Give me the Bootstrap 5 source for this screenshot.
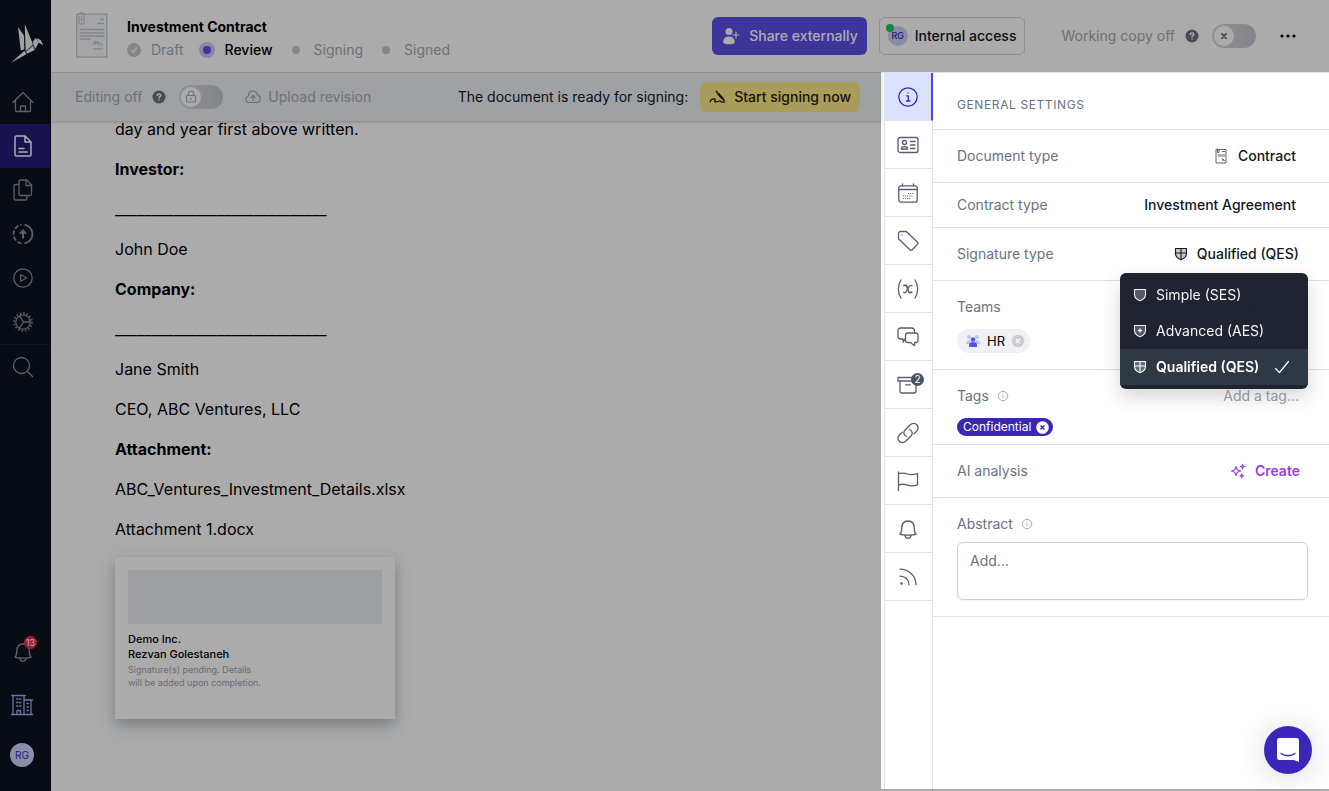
<!DOCTYPE html>
<html lang="en">
<head>
<meta charset="utf-8">
<meta name="viewport" content="width=device-width, initial-scale=1">
<title>Investment Contract</title>
<link href="https://cdn.jsdelivr.net/npm/bootstrap@5.3.0/dist/css/bootstrap.min.css" rel="stylesheet">
<style>
:root{--ink:#111827;--muted:#6b7280;--faint:#a3a9b5;--line:#e0e1e7;--brand:#3a27ba;--accent:#5b50e6}
body{font-family:Inter,"Liberation Sans",sans-serif;font-size:14px;line-height:20px;color:var(--ink);background:#fff}
svg{display:block;flex:none;fill:none;stroke:currentColor;stroke-width:1.3;stroke-linecap:round;stroke-linejoin:round}
button{font-family:inherit}
.plain{background:none;border:0;padding:0;color:inherit}
.fw-mid{font-weight:500}
.muted{color:var(--muted)}
.faint{color:var(--faint)}

.side-nav{width:51px;background:#0b1320;color:#8b8f96;border-right:1px solid #070b1c}
.side-nav a{color:inherit;height:44px;padding-right:4px}
.side-nav a.current{background:#281b78;color:#fff}
.side-nav .logo{height:80px;color:#f0f0f0;padding:6px 0 0 4px}
.side-nav .rule{border-top:1px solid #1b2333}
.side-nav .alerts{height:62px}
.side-nav .firm{height:44px;color:#9fb0f0;padding-right:6px}
.side-nav .me{height:56px;padding-right:6px}
.count{font-size:9px;line-height:13px;min-width:13px;height:13px;border-radius:7px;text-align:center;color:#fff}
.count-red{background:#fb2846;left:24px;top:15px}
.count-gray{background:#4b5563;left:26px;top:12px;font-size:10px}
.avatar{width:24px;height:24px;border-radius:50%;background:#cdd2fd;color:var(--brand);font-size:10px}
.avatar-sm{width:20px;height:20px;font-size:9px}
.online{width:8px;height:8px;border-radius:50%;background:#22c55e;left:-2px;top:-2px}

.top-bar{min-height:73px;border-bottom:1px solid #e0e1e7;padding:0 32px 0 24px}
.doc-head{margin-left:18px}
.doc-name{font-size:14px;line-height:20px}
.step-mark{width:16px;height:16px;border-radius:50%}
.step-mark i{width:8px;height:8px;border-radius:50%;background:#c4c8cf}
.step-mark.on{background:#cdc9fb}
.step-mark.on i{background:var(--accent)}
.step-mark.done{width:14px;height:14px;background:#c4c8cf;color:#fff}
.steps{gap:15px;padding-top:3px}
.step{gap:10px}
.btn-bar{height:38px;border-radius:6px;font-size:14px;font-weight:500;line-height:20px;padding:0 8px}
.btn-share{background:var(--accent);color:#fff}
.btn-inside{border:1px solid #d1d5db;background:#fff;color:var(--ink);margin-left:12px;gap:7px}
.copy-group{margin-left:36px}
.switch-text{margin-right:10px}
.help-mark{margin-right:13px}
.more{margin-left:23px}
.btn-sign{height:30px;border-radius:6px;background:#fee986;color:#2e1a06;font-size:14px;font-weight:500;line-height:20px;padding:0 8px}
.switch{width:44px;height:24px}
.switch input{appearance:none;width:44px;height:24px;margin:0;border-radius:12px;background:linear-gradient(90deg,#d6d9df,#c2c6cd);cursor:pointer}
.switch .knob{left:2px;top:2px;width:20px;height:20px;border-radius:50%;background:#fff;color:#a9adb6;pointer-events:none}
.tool-bar{height:48px;background:#eef0f4;padding:0 21px 0 24px;box-shadow:0 1px 3px rgba(0,0,0,.22)}
.upload{margin-left:22px;gap:7px}
.ready{margin-right:12px}

.doc-body{padding:0 64px;color:#000}
.doc-text{font-size:16px;line-height:16px;gap:24px}
.doc-text p{margin:0}
.doc-text strong{font-weight:700}
.sign-card{width:280px;min-height:162px;margin-top:20px;padding:13px;background:#fff;box-shadow:0 6px 14px rgba(30,41,69,.34)}
.sign-slot{height:54px;background:#ebedf0;margin-bottom:8px}
.sign-card .who{font-size:11px;line-height:15px;font-weight:500}
.sign-card .note{font-size:9px;line-height:13px;color:#9ca3af;margin-top:1px}

.info-panel{width:448px;background:#fff}
.grip{width:3px;background:#fbfbfd}
.rail{width:49px;border-left:1px solid var(--line);border-right:1px solid var(--line);color:#566070}
.rail button{height:48px;border-bottom:1px solid var(--line);padding-right:2px}
.rail button.current{background:#dbe2fe;color:var(--brand);border-right:2px solid #5046e5;margin-right:-1px;padding:0}
.set-row{border-bottom:1px solid var(--line);padding:0 21px 0 24px}
.h-row{height:53px}
.h-row-s{height:45px}
.panel-title{height:57px;padding-top:8px;font-size:12px;letter-spacing:.05em;font-weight:400;color:var(--muted);margin:0}
.stack-row{padding-top:16px;padding-bottom:16px}
.tight{padding-bottom:8px}
.value{padding-right:12px;gap:9px}
.value-s{padding-right:8px;gap:9px}
.pick{height:38px;padding-right:9px}
.ghost{border:0;background:none;outline:0;padding:0 9px 0 0;height:20px;text-align:right;width:160px;color:var(--ink)}
.ghost::placeholder{color:#9ca3af;opacity:1}
.chip{height:24px;border-radius:12px;background:#f0f1f4;font-size:13px;padding:0 5px 0 8px;gap:6px;color:#000}
.chip-tag{height:18px;background:var(--brand);color:#fff;font-size:12px;padding:0 4px 0 6px;gap:5px}
.type-menu{right:0;left:auto;top:38px;width:188px;background:rgba(27,31,43,.975);border:0;border-radius:6px;padding:4px 0;color:#f3f4f6;box-shadow:0 8px 20px rgba(0,0,0,.16);font-size:14px}
.type-menu button{height:36px;padding:0 18px 0 12px;color:#f3f4f6;gap:8px;line-height:20px}
.type-menu button:hover,.type-menu button.on{background:#2f3945;color:#fff}
.create{color:#9f3bea}
.abstract{height:58px;border:1px solid #cfd0d8;border-radius:6px;padding:8px 12px;font-size:14px;resize:none;display:block;box-shadow:0 1px 2px rgba(0,0,0,.05)}
.abstract::placeholder{color:var(--muted);opacity:1}
.chat{right:17px;bottom:17px;width:48px;height:48px;border-radius:50%;background:var(--brand);color:#fff;box-shadow:0 2px 28px rgba(0,0,0,.16);z-index:20}
.spotlight{top:72px;right:0;bottom:2px;width:448px;box-shadow:0 0 0 9999px rgba(0,0,0,.33);pointer-events:none;z-index:30}
.shrinkable{min-width:0;min-height:0}
</style>
</head>
<body class="vh-100 overflow-hidden">
<svg width="0" height="0" class="position-absolute" aria-hidden="true">
  <symbol id="help" viewBox="0 0 14 14"><circle cx="7" cy="7" r="6.500" fill="currentColor" stroke="none"/><path d="M5.300 5.500c0-2.200 3.400-2.100 3.400-.1 0 1.300-1.700 1.300-1.700 2.500M7 10v.1" stroke="#fff" stroke-width="1.500"/></symbol>
  <symbol id="info" viewBox="0 0 12 12"><circle cx="6" cy="6" r="4.700" stroke-width="1"/><path d="M6 5.700v2.300M6 3.900v.1" stroke-width="1"/></symbol>
  <symbol id="shield" viewBox="0 0 14 14"><path d="M1.500 1.500h11v5c0 3-2.300 5-5.500 6.300C3.800 11.500 1.500 9.500 1.500 6.500z" fill="currentColor" fill-opacity=".25" stroke-width="1.100"/></symbol>
  <symbol id="bell" viewBox="0 0 20 20"><path d="M1.800 15.200c1.700-1.300 1.900-3 1.900-5.700 0-5 2.600-7.500 6.300-7.500s6.300 2.500 6.300 7.500c0 2.700.2 4.400 1.900 5.700-3 1.200-13.400 1.200-16.400 0zM7 16.200c.2 4 5.800 4 6 0"/></symbol>
</svg>

<div class="d-flex h-100">
  <nav class="side-nav d-flex flex-column flex-shrink-0" aria-label="Main">
    <a class="logo d-flex align-items-center justify-content-center" href="#" aria-label="Home page">
      <svg width="33" height="39" viewBox="0 0 33 39" style="stroke:none;fill:currentColor"><path d="M7 3l6 8.500.3 13.800-3.500 1.200z"/><path d="M13.700 0l7.800 19 .2 2-7 6.200z"/><path d="M0 38.700l13.500-12 1.800 3.500z"/><path d="M15 27.800l6.900-6 1.900 4.200-8 3.800z"/><path d="M21.800 17.500l3-3.500 3 4.500-3.600 6.500-1.800-4z"/><path d="M25.700 14l4 2 2.500 5.300-4.500-2.600z"/></svg>
    </a>
    <a class="d-flex align-items-center justify-content-center" href="#" aria-label="Dashboard"><svg width="22" height="22" viewBox="0 0 22 22"><path d="M1 11.500L11 1.500l10 10M3.500 9.500V19.500a1 1 0 001 1h13a1 1 0 001-1V9.500M8.500 20.500v-5.500h5v5.500"/></svg></a>
    <a class="current d-flex align-items-center justify-content-center" href="#" aria-label="Documents"><svg width="20" height="22" viewBox="0 0 20 22" style="stroke-width:1.500"><path d="M3.500 1H12l6 6v12.500a1.500 1.500 0 01-1.500 1.500h-13A1.500 1.500 0 012 19.500v-17A1.500 1.500 0 013.500 1zM12 1v6h6M6 13.500h5M6 17h8"/></svg></a>
    <a class="d-flex align-items-center justify-content-center" href="#" aria-label="Templates"><svg width="20" height="22" viewBox="0 0 20 22"><path d="M7.500 1H14l4.500 5v9a1.500 1.500 0 01-1.500 1.500H7.500A1.500 1.500 0 016 15V2.500A1.500 1.500 0 017.500 1zM13 1v5.500h5.500M6 5.500H2.500A1.500 1.500 0 001 7v12.500A1.500 1.500 0 002.500 21h10a1.500 1.500 0 001.500-1.500v-3"/></svg></a>
    <a class="d-flex align-items-center justify-content-center" href="#" aria-label="Imports"><svg width="22" height="22" viewBox="0 0 22 22" style="stroke-linecap:butt"><path d="M12.500 1.700a9.400 9.400 0 010 18.600" stroke-width="1.800"/><path d="M9.500 20.300a9.400 9.400 0 010-18.600" stroke-width="1.800" stroke-dasharray="4.500 1.800"/><path d="M11 15.500V9" stroke-width="2"/><path d="M11 6l4.200 4.700H6.800z" fill="currentColor" stroke="none"/></svg></a>
    <a class="d-flex align-items-center justify-content-center" href="#" aria-label="Tutorials"><svg width="20" height="20" viewBox="0 0 20 20"><circle cx="10" cy="10" r="9.200"/><path d="M7.700 6.700v6.600l6-3.300z"/></svg></a>
    <a class="d-flex align-items-center justify-content-center" href="#" aria-label="Settings"><svg width="20" height="20" viewBox="0 0 20 20"><circle cx="10" cy="10" r="7.200"/><circle cx="10" cy="10" r="8.900" stroke-width="1.800" stroke-dasharray="1.500 1.990" stroke-linecap="butt"/><path d="M10.500 10H17M10.500 10L6.500 3.800M10.500 10l-4 6.200"/></svg></a>
    <a class="rule d-flex align-items-center justify-content-center" href="#" aria-label="Search"><svg width="22" height="22" viewBox="0 0 22 22"><circle cx="9.500" cy="9.500" r="8"/><path d="M15.500 15.500l5 5"/></svg></a>
    <a class="alerts mt-auto position-relative d-flex align-items-center justify-content-center text-decoration-none" href="#" aria-label="Notifications"><svg width="20" height="20"><use href="#bell"/></svg><span class="count count-red position-absolute">13</span></a>
    <a class="firm d-flex align-items-center justify-content-center" href="#" aria-label="Company"><svg width="22" height="22" viewBox="0 0 22 22" stroke-linecap="butt"><path d="M2 20.500V1.500h11v19M13 6h7v14.500M.5 20.500h21M.7 1.500h13.800M13 6h8.500M6 20v-3.500h3.500V20"/><path d="M5.500 5h1.300M8.500 5h1.300M5.500 8.500h1.300M8.500 8.500h1.300M5.500 12h1.300M8.500 12h1.300M16 9.500h1.300M16 13h1.300M16 16.500h1.300"/></svg></a>
    <a class="me d-flex align-items-center justify-content-center text-decoration-none mb-2" href="#" aria-label="Account"><span class="avatar d-flex align-items-center justify-content-center">RG</span></a>
  </nav>

  <div class="shrinkable flex-grow-1 d-flex flex-column">
    <header class="top-bar d-flex align-items-center">
      <svg width="34" height="50" viewBox="0 0 34 50" style="stroke:#c3c7ce;stroke-linecap:butt"><path d="M1.700 3.200h30.100v43H1.700z" fill="#f6f7f9"/><path d="M22 12.500h7M25 8.500h4" stroke-width="1.300"/><path d="M4.500 18.500h25M4.500 22h25M4.500 25h25M4.500 28h11M18 37.800h10" stroke-width="1.300"/><path d="M18 34c2-5 3-4 2.500-1 2-4 3-2 2.500 1 2-3 2-3 3 0l2-.5" stroke-width="1.300"/><path d="M4 5v5.500c0 3.500 5 3.500 5 0V4c0-3.500-4.500-3-4.500 0M6.500 5.500v5" stroke-width="1.200"/></svg>
      <div class="doc-head pt-1 me-auto">
        <h1 class="doc-name fw-bold m-0 text-black">Investment Contract</h1>
        <div class="steps d-flex faint">
          <div class="step d-flex align-items-center"><span class="step-mark done d-flex align-items-center justify-content-center"><svg width="8" height="8" viewBox="0 0 8 8"><path d="M1.500 4.500L3.300 6.200 6.500 2"/></svg></span><span>Draft</span></div>
          <div class="step d-flex align-items-center"><span class="step-mark on d-flex align-items-center justify-content-center"><i></i></span><span class="fw-mid text-black">Review</span></div>
          <div class="step d-flex align-items-center"><span class="step-mark d-flex align-items-center justify-content-center"><i></i></span><span>Signing</span></div>
          <div class="step d-flex align-items-center"><span class="step-mark d-flex align-items-center justify-content-center"><i></i></span><span>Signed</span></div>
        </div>
      </div>
      <button type="button" class="btn btn-bar btn-share d-flex align-items-center gap-2 ms-3"><svg width="20" height="20" viewBox="0 0 20 20" style="stroke:none;fill:currentColor"><circle cx="8" cy="5.500" r="3.500"/><path d="M2.200 17c0-4.500 2-6.500 5.800-6.500s5.800 2 5.800 6.500c-2 1.800-9.600 1.800-11.600 0z"/><path d="M15 6v6M12 9h6" style="stroke:currentColor;stroke-width:1.200"/></svg>Share externally</button>
      <button type="button" class="btn btn-bar btn-inside d-flex align-items-center"><span class="avatar avatar-sm position-relative d-flex align-items-center justify-content-center">RG<span class="online position-absolute"></span></span>Internal access</button>
      <div class="copy-group d-flex align-items-center">
        <label for="copy" class="switch-text faint">Working copy off</label>
        <svg width="14" height="14" class="help-mark muted"><use href="#help"/></svg>
        <span class="switch position-relative flex-shrink-0"><input type="checkbox" id="copy"><span class="knob position-absolute d-flex align-items-center justify-content-center"><svg width="8" height="8" viewBox="0 0 8 8" class="muted"><path d="M2 2l4 4M6 2L2 6" stroke-width="1.900"/></svg></span></span>
      </div>
      <button type="button" class="more plain text-black" aria-label="More"><svg width="18" height="6" viewBox="0 0 18 6" style="fill:currentColor;stroke:none"><circle cx="3" cy="3" r="1.600"/><circle cx="9" cy="3" r="1.600"/><circle cx="15" cy="3" r="1.600"/></svg></button>
    </header>

    <div class="shrinkable d-flex flex-grow-1">
      <main class="shrinkable flex-grow-1">
        <div class="tool-bar d-flex align-items-center position-relative">
          <label for="edit" class="switch-text faint">Editing off</label>
          <svg width="14" height="14" class="help-mark muted"><use href="#help"/></svg>
          <span class="switch position-relative"><input type="checkbox" id="edit"><span class="knob position-absolute d-flex align-items-center justify-content-center"><svg width="12" height="14" viewBox="0 0 12 14"><rect x="1.500" y="5.500" width="9" height="6.500" rx="1" stroke-width="1.200"/><path d="M3.500 5.500v-2c0-3 5-3 5 0v2M6 8v1.500" stroke-width="1.200"/></svg></span></span>
          <button type="button" class="upload plain faint d-flex align-items-center"><svg width="16" height="14" viewBox="0 0 16 14"><path d="M4.500 12.500C2.300 12.500 1 11 1 9.200 1 7.500 2 6.300 3.500 6 3.500 3 5.500 1.200 8 1.200c2.300 0 4 1.400 4.300 3.600C14 5 15.200 6.500 15.200 8.500c0 2.400-1.500 4-3.700 4zM8 10.500V6M5.800 7.700L8 5.500l2.200 2.200" stroke-width="1.200"/></svg>Upload revision</button>
          <span class="ready ms-auto">The document is ready for signing:</span>
          <button type="button" class="btn btn-sign d-flex align-items-center gap-2"><svg width="17" height="14" viewBox="0 0 17 14"><path d="M9 3.500l4.500 5" stroke-width="2.600" stroke-linecap="butt"/><path d="M7.300 1.200L8.500 3M13.800 8.500l1.200 2" stroke-width="1.500"/><path d="M1.200 11.800C1 9.500 4.500 8.500 6 9s-2 3 .5 3 3.500-1.500 4.500-1 1 1.500 4.800.9" stroke-width="1.300"/></svg>Start signing now</button>
        </div>
        <article class="doc-body">
          <div class="doc-text d-flex flex-column">
            <p>day and year first above written.</p>
            <p><strong>Investor:</strong></p>
            <p>_____________________________</p>
            <p>John Doe</p>
            <p><strong>Company:</strong></p>
            <p>_____________________________</p>
            <p>Jane Smith</p>
            <p>CEO, ABC Ventures, LLC</p>
            <p><strong>Attachment:</strong></p>
            <p>ABC_Ventures_Investment_Details.xlsx</p>
            <p>Attachment 1.docx</p>
          </div>
          <section class="sign-card">
            <div class="sign-slot"></div>
            <div class="who">Demo Inc.<br>Rezvan Golestaneh</div>
            <div class="note">Signature(s) pending. Details<br>will be added upon completion.</div>
          </section>
        </article>
      </main>

      <aside class="info-panel d-flex flex-shrink-0">
        <div class="grip"></div>
        <div class="rail d-flex flex-column">
          <button type="button" class="plain current d-flex align-items-center justify-content-center" aria-label="General"><svg width="20" height="20" viewBox="0 0 20 20"><circle cx="10" cy="10" r="9.200"/><path d="M8.700 8.800h1.600v5M8.500 14h3.400M10 5.900v.2"/></svg></button>
          <button type="button" class="plain d-flex align-items-center justify-content-center" aria-label="Parties"><svg width="22" height="18" viewBox="0 0 22 18"><rect x="1" y="1.500" width="20" height="15" rx="2"/><circle cx="7.500" cy="6.500" r="2"/><path d="M4.300 13c0-3.300 6.400-3.300 6.400 0zM13.500 5.500h4.500M13.500 9h4.500M13.500 12.500h4.500"/></svg></button>
          <button type="button" class="plain d-flex align-items-center justify-content-center" aria-label="Dates"><svg width="20" height="20" viewBox="0 0 20 20"><rect x=".8" y="2.800" width="18.400" height="16.400" rx="2"/><path d="M1 6.500h18M4.500.8v2M15.500.8v2"/><path d="M10.500 10.500h5M5.500 13h9M5.500 15.500h8" stroke-dasharray=".1 2" stroke-width="1.200"/></svg></button>
          <button type="button" class="plain d-flex align-items-center justify-content-center" aria-label="Tags"><svg width="22" height="22" viewBox="0 0 22 22"><path d="M1.500 3.500a2 2 0 012-2h5.800l11 10.500c1 1 .8 1.700.2 2.300l-5.300 5.500c-.8.800-1.600.7-2.300 0L1.500 8.800z"/><path d="M5 5v.1"/></svg></button>
          <button type="button" class="plain d-flex align-items-center justify-content-center" aria-label="Variables"><svg width="22" height="20" viewBox="0 0 22 20"><path d="M4 1C.5 6 .5 14 4 19M18 1c3.500 5 3.500 13 0 18M15 6.700c-1.300-1-2.800.3-4.300 3.300S8 14.500 6.800 13.300"/><path d="M7 6.700c2-1.700 3 .3 3.700 3.300s1.500 4.800 4 3" stroke-width="1.700"/></svg></button>
          <button type="button" class="plain d-flex align-items-center justify-content-center" aria-label="Comments"><svg width="22" height="20" viewBox="0 0 22 20"><path d="M8.500 11.500L6 15v-3H3.500C2 12 1 11 1 9.500v-6C1 2 2 1 3.500 1h11C16 1 17.500 2 17.500 4v2"/><path d="M11 6h7.500c1.500 0 2.500 1 2.500 2.500V13c0 1.500-1 2.500-2.500 2.500h-.7l-.3 3.200-4-3.200H11c-1.500 0-2.500-1-2.500-2.500V8.500C8.500 7 9.500 6 11 6z"/></svg></button>
          <button type="button" class="plain position-relative d-flex align-items-center justify-content-center" aria-label="Archive"><svg width="22" height="20" viewBox="0 0 22 20"><path d="M1 2.500h20V6H1zM3 6.500V16a2 2 0 002 2h12a2 2 0 002-2V6.500M8.500 9.800h5"/></svg><span class="count count-gray position-absolute">2</span></button>
          <button type="button" class="plain d-flex align-items-center justify-content-center" aria-label="Links"><svg width="22" height="22" viewBox="0 0 22 22"><path d="M9.500 14.500c-3-1.500-3.500-4-1.500-6.500l5-5c2.500-2.200 5.500-2 7 0s1.300 4.300-.5 6.300L17 11.800"/><path d="M12.500 7.500c3 1.500 3.500 4 1.500 6.500l-5 5c-2.500 2.200-5.500 2-7 0s-1.300-4.300.5-6.300L5 10.200"/></svg></button>
          <button type="button" class="plain d-flex align-items-center justify-content-center" aria-label="Milestones"><svg width="22" height="20" viewBox="0 0 22 20"><path d="M1.500.8v18.700M1.500 2.500c3.500-1 6-.5 9 .5s6 1 10-.5v11.300c-4 1.500-7 1.300-10 .3s-5.500-1.300-9-.3"/></svg></button>
          <button type="button" class="plain d-flex align-items-center justify-content-center" aria-label="Reminders"><svg width="20" height="20"><use href="#bell"/></svg></button>
          <button type="button" class="plain d-flex align-items-center justify-content-center" aria-label="Activity"><svg width="18" height="18" viewBox="0 0 18 18"><path d="M1 1.200c9 0 16 7 16 15.500M1 8.200c5 0 9 3.500 9 8.500"/><circle cx="2.500" cy="15.500" r="1.300" fill="currentColor" stroke="none"/></svg></button>
        </div>

        <div class="flex-grow-1">
          <h2 class="set-row panel-title d-flex align-items-center">GENERAL SETTINGS</h2>
          <div class="set-row h-row d-flex align-items-center justify-content-between">
            <span class="muted">Document type</span>
            <button type="button" class="plain value fw-mid d-flex align-items-center"><svg width="16" height="16" viewBox="0 0 16 16"><g stroke="#5f636b" stroke-width="1" stroke-linecap="butt" stroke-linejoin="miter"><path d="M3 1.500h10v13.500H3z"/><path d="M4.500 7.500h7.500" stroke-width="3" stroke="#b0b2b6"/><path d="M4.500.5v4h1.500v-3M9 3.500h3M8.500 10.500l3.500 2.500M9 12h2"/></g></svg>Contract</button>
          </div>
          <div class="set-row h-row-s d-flex align-items-center justify-content-between">
            <span class="muted">Contract type</span>
            <button type="button" class="plain value fw-mid">Investment Agreement</button>
          </div>
          <div class="set-row h-row d-flex align-items-center justify-content-between">
            <span class="muted">Signature type</span>
            <div class="position-relative">
              <button type="button" class="plain value-s pick fw-mid d-flex align-items-center" aria-expanded="true"><svg width="14" height="14" viewBox="0 0 14 14"><use href="#shield"/><path d="M7 2v10.500M2 6h10" stroke-width="1.100"/></svg>Qualified (QES)</button>
              <div class="type-menu dropdown-menu show">
                <button type="button" class="plain w-100 d-flex align-items-center"><svg width="16" height="14" viewBox="-1 0 16 14"><use href="#shield" width="14" height="14"/></svg>Simple (SES)</button>
                <button type="button" class="plain w-100 d-flex align-items-center"><svg width="16" height="14" viewBox="-1 0 16 14"><use href="#shield" width="14" height="14"/><path d="M7 5v3M5.500 6.500h3" stroke-width="1.400"/></svg>Advanced (AES)</button>
                <button type="button" class="plain w-100 d-flex align-items-center on fw-semibold"><svg width="16" height="14" viewBox="-1 0 16 14"><use href="#shield" width="14" height="14"/><path d="M7 2v10.500M2 6h10" stroke-width="1.100"/></svg>Qualified (QES)<svg width="16" height="14" viewBox="0 0 16 14" class="ms-auto"><path d="M1.500 8.500l4 4L14.500 1.500" stroke-width="1.200"/></svg></button>
              </div>
            </div>
          </div>
          <div class="set-row stack-row">
            <div class="d-flex justify-content-between"><label for="teams" class="muted">Teams</label><input id="teams" class="ghost" placeholder="Select teams..."></div>
            <div class="d-flex mt-2 pt-1"><span class="chip d-flex align-items-center"><svg width="16" height="14" viewBox="0 0 16 14" style="stroke:none"><g fill="#b9c6fb"><circle cx="4" cy="3" r="2"/><circle cx="12" cy="3" r="2"/><path d="M1 10c0-5 6-5 6 0zM9 10c0-5 6-5 6 0z"/></g><g fill="#5b50e6"><circle cx="8" cy="5.500" r="2.200"/><path d="M4 13v-2.500c0-3.500 8-3.500 8 0V13z"/></g></svg>HR<button type="button" class="plain" aria-label="Remove HR"><svg width="14" height="14" viewBox="-1 -1 14 14"><circle cx="6" cy="6" r="6.300" fill="#cbccd4" stroke="none"/><path d="M4.300 4.300l3.400 3.400M7.700 4.300L4.300 7.700" stroke="#fff" stroke-width="1.300"/></svg></button></span></div>
          </div>
          <div class="set-row stack-row tight">
            <div class="d-flex justify-content-between"><label for="tags" class="muted d-flex align-items-center gap-2">Tags <svg width="12" height="12" class="faint"><use href="#info"/></svg></label><input id="tags" class="ghost" placeholder="Add a tag..."></div>
            <div class="d-flex mt-2 pt-1"><span class="chip chip-tag d-flex align-items-center">Confidential<button type="button" class="plain" aria-label="Remove Confidential"><svg width="13" height="13" viewBox="-.5 -.5 13 13"><circle cx="6" cy="6" r="6.300" fill="#fff" stroke="none"/><path d="M4.500 4.500l3 3M7.500 4.500l-3 3" stroke="#3a27ba" stroke-width="1.600"/></svg></button></span></div>
          </div>
          <div class="set-row h-row d-flex align-items-center justify-content-between">
            <span class="muted">AI analysis</span>
            <button type="button" class="create plain value-s fw-semibold d-flex align-items-center"><svg width="16" height="16" viewBox="0 0 16 16"><path d="M6 3.500l1.300 3.200L10.500 8 7.300 9.300 6 12.500 4.700 9.300 1.500 8l3.200-1.300zM12.500 1.200l.6 1.700 1.700.6-1.700.6-.6 1.700-.6-1.700-1.700-.6 1.700-.6zM11.700 11l.5 1.400 1.300.4-1.300.5-.5 1.300-.5-1.300-1.300-.5 1.300-.4z" stroke-width="1.100"/></svg>Create</button>
          </div>
          <div class="set-row stack-row">
            <label for="abstract" class="muted d-flex align-items-center gap-2 mb-2">Abstract <svg width="12" height="12" class="faint"><use href="#info"/></svg></label>
            <textarea id="abstract" class="abstract w-100" placeholder="Add..."></textarea>
          </div>
        </div>
      </aside>
    </div>
  </div>
</div>

<button type="button" class="plain chat position-fixed d-flex align-items-center justify-content-center" aria-label="Open chat"><svg width="22" height="24" viewBox="0 0 22 24"><path d="M2.500 0h17A2.500 2.500 0 0122 2.500V24l-5-2H2.500A2.500 2.500 0 010 19.500v-17A2.500 2.500 0 012.500 0z" fill="#fff" stroke="none"/><path d="M4 15.500c4 3 10 3 14 0" stroke="#3a27ba" stroke-width="1.400"/></svg></button>
<div class="spotlight position-fixed" aria-hidden="true"></div>
<script src="https://cdn.jsdelivr.net/npm/bootstrap@5.3.0/dist/js/bootstrap.bundle.min.js"></script>
</body>
</html>
